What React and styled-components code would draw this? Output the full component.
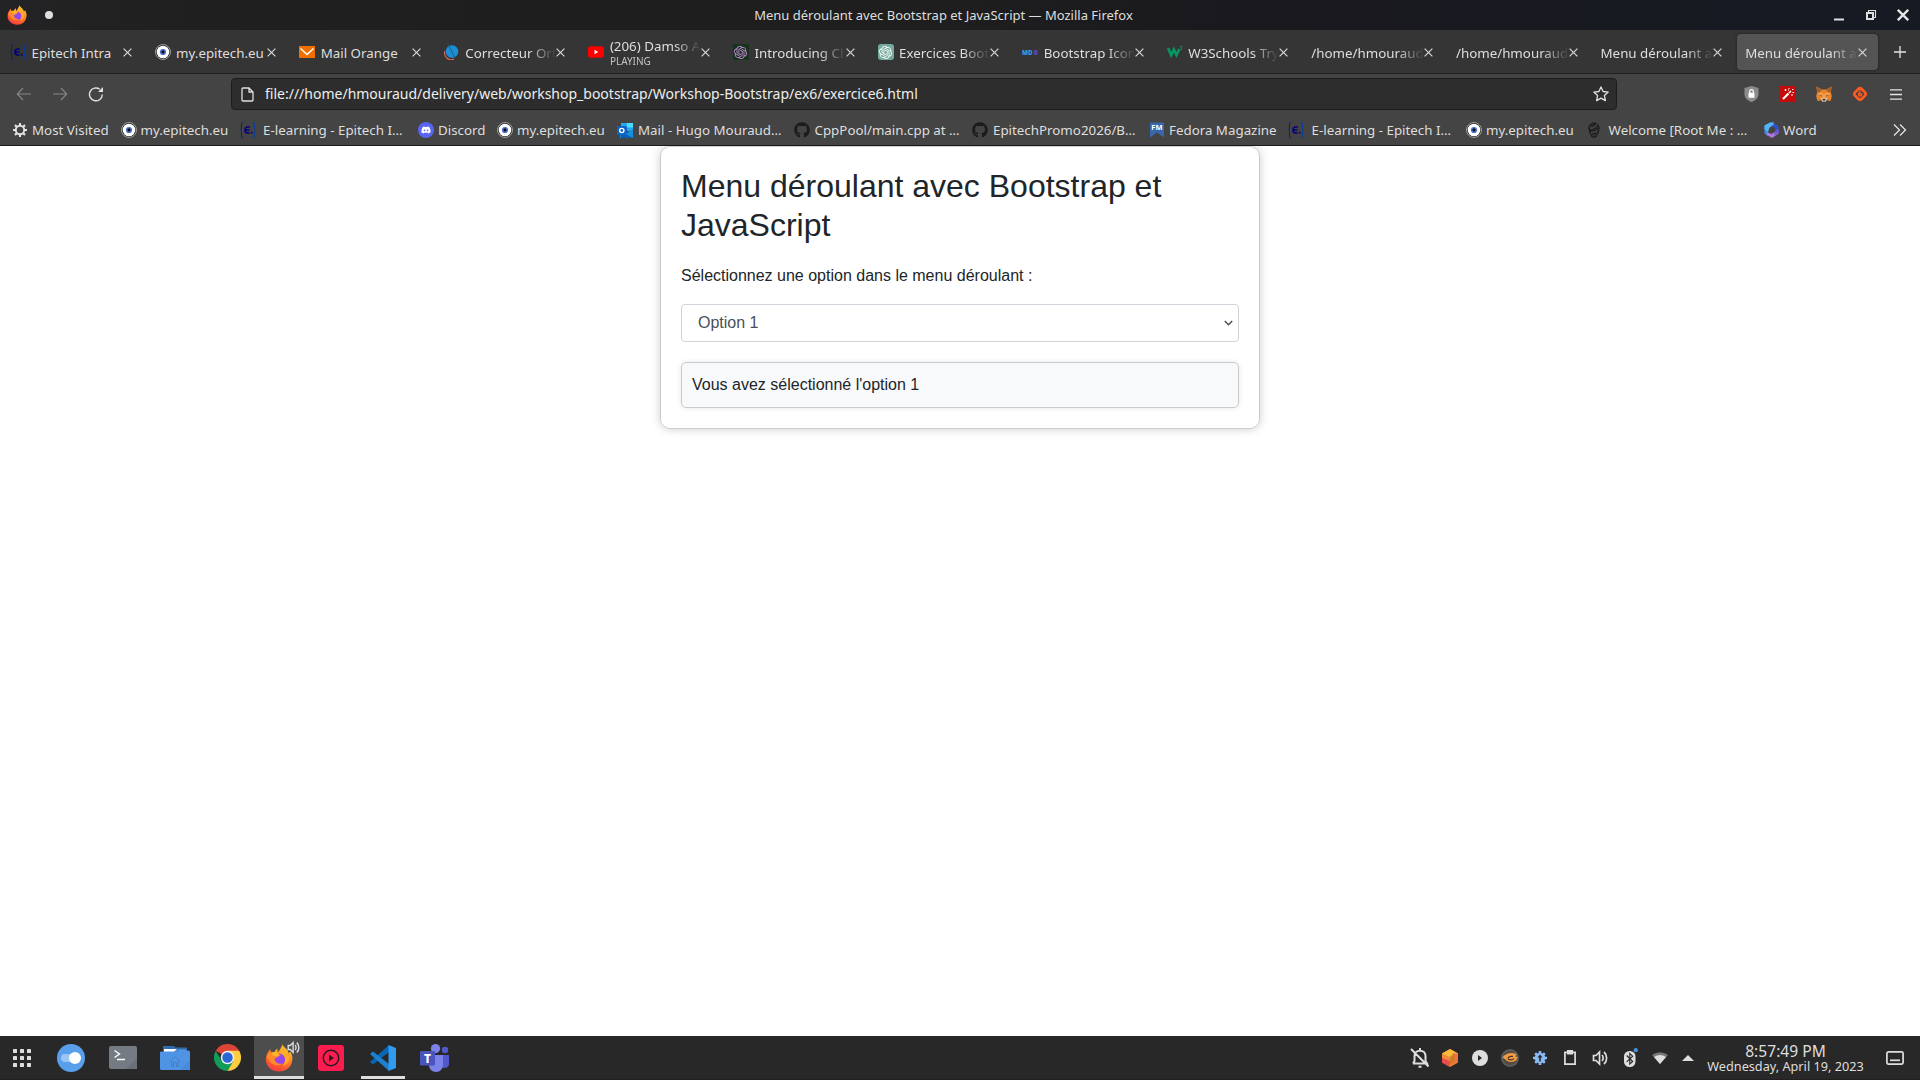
import React, { useState } from "react";
import styled, { createGlobalStyle } from "styled-components";
import { FaGithub, FaDiscord } from "react-icons/fa";
import { SiOpenai } from "react-icons/si";

const Global = createGlobalStyle`
  *, *::before, *::after { box-sizing: border-box; }
  body { margin: 0; background: #fff; overflow: hidden; }
  svg { display: block; flex: none; }
`;

const UI = `"Noto Sans", sans-serif`;

const Screen = styled.div`
  width: 1920px;
  height: 1080px;
  display: flex;
  flex-direction: column;
  font-family: ${UI};
  color: #dedede;
  overflow: hidden;
`;

/* ---------- window title ---------- */
const TitleBar = styled.header`
  height: 30px;
  flex: none;
  display: grid;
  grid-template-columns: 1fr auto 1fr;
  align-items: center;
  background: linear-gradient(90deg, #232325 0%, #1f1f1f 12%, #1e1e1f 50%, #19191e 66%, #161a23 100%);
`;
const TitleLeft = styled.div`
  display: flex;
  align-items: center;
  gap: 18px;
  padding-left: 7px;
`;
const PinDot = styled.span`
  width: 8px;
  height: 8px;
  border-radius: 50%;
  background: #dedede;
`;
const TitleText = styled.div`
  font-size: 13px;
  line-height: 20px;
  padding-right: 33px;
  white-space: nowrap;
`;
const WindowButtons = styled.div`
  display: flex;
  justify-content: flex-end;
  gap: 20px;
  padding-right: 11px;
`;

/* ---------- tabs ---------- */
const TabBar = styled.nav`
  height: 44px;
  flex: none;
  display: flex;
  background: #353535;
  border-bottom: 1px solid #202020;
`;
const TabCell = styled.div`
  width: 144.6px;
  padding: 4px 2px 3px;
  display: flex;
`;
const TabBody = styled.div`
  flex: 1;
  min-width: 0;
  display: flex;
  align-items: center;
  padding-left: 8px;
  border-radius: 4px;
  background: ${(p) => (p.$active ? "#545454" : "transparent")};
  box-shadow: ${(p) => (p.$active ? "0 0 3px rgba(0,0,0,.45)" : "none")};
`;
const TabIcon = styled.span`
  width: 16px;
  height: 16px;
  margin-right: 5.5px;
`;
const TabLabel = styled.div`
  flex: 1;
  min-width: 0;
  overflow: hidden;
  white-space: nowrap;
  font-size: 13.33px;
  line-height: ${(p) => (p.$playing ? 15 : 18)}px;
  padding-top: 2px;
  mask-image: ${(p) => (p.$fade ? "linear-gradient(to left, transparent, #000 27px)" : "none")};
`;
const TabStatus = styled.div`
  font-size: 10px;
  line-height: 14px;
  color: #c4c4c4;
`;
const TabClose = styled.span`
  width: 20px;
  display: flex;
`;
const NewTab = styled.div`
  flex: 1;
  display: flex;
  align-items: center;
  justify-content: center;
  padding-top: 1px;
`;

/* ---------- toolbar ---------- */
const NavBar = styled.div`
  height: 40px;
  flex: none;
  display: flex;
  align-items: center;
  padding: 0 6px;
  background: #444;
`;
const NavButton = styled.span`
  width: 36px;
  height: 32px;
  display: flex;
  align-items: center;
  justify-content: center;
`;
const UrlBar = styled.div`
  width: 1386px;
  height: 32px;
  margin: 0 116.5px 0 117px;
  display: flex;
  align-items: center;
  padding: 0 7px 0 9px;
  background: #2d2d2d;
  border: 1px solid #1c1c1c;
  border-radius: 4px;
`;
const UrlText = styled.div`
  flex: 1;
  padding: 0 0 1px 11px;
  font-size: 14px;
  line-height: 20px;
  color: #eee;
  white-space: nowrap;
`;

const Bookmarks = styled.div`
  height: 32px;
  flex: none;
  display: flex;
  align-items: center;
  padding: 0 13px 0 12px;
  background: #444;
  border-bottom: 1px solid #1c1820;
`;
const Bookmark = styled.div`
  width: ${(p) => p.$w}px;
  flex: none;
  display: flex;
  align-items: center;
  gap: ${(p) => p.$gap}px;
  font-size: 13.33px;
  line-height: 18px;
  white-space: nowrap;
`;
const Overflow = styled.div`
  margin-left: auto;
`;

/* ---------- page ---------- */
const Page = styled.main`
  flex: 1;
  min-height: 0;
  overflow: hidden;
  background: #fff;
  color: #212529;
  font-family: "Liberation Sans", Arial, sans-serif;
  font-size: 16px;
  line-height: 24px;
`;
const Card = styled.section`
  width: 600px;
  margin: 0 auto;
  padding: 20px;
  border: 1px solid #ccc;
  border-radius: 10px;
  box-shadow: 0 0 10px rgba(0, 0, 0, 0.2);
`;
const Heading = styled.h1`
  margin: 0 0 18.8px;
  font-size: 32px;
  line-height: 39px;
  font-weight: 400;
`;
const Lead = styled.p`
  margin: 0 0 16px;
`;
const Select = styled.div`
  height: 38px;
  display: flex;
  align-items: center;
  justify-content: space-between;
  padding: 0 5px 0 16px;
  border: 1px solid #ced4da;
  border-radius: 4px;
  color: #495057;
`;
const Result = styled.div`
  margin-top: 20px;
  padding: 10px;
  border: 1px solid #ccc;
  border-radius: 5px;
  background: #f8f9fa;
  box-shadow: 0 0 5px rgba(0, 0, 0, 0.1);
`;

/* ---------- desktop panel ---------- */
const Panel = styled.footer`
  height: 44px;
  flex: none;
  display: flex;
  background: #282828;
  border-bottom: 1px solid #211f20;
`;
const Launcher = styled.div`
  width: 46px;
  display: flex;
  align-items: center;
  padding-left: 12.5px;
`;
const Task = styled.div`
  width: 50px;
  margin-right: 2px;
  position: relative;
  display: flex;
  align-items: center;
  justify-content: center;
  background: ${(p) => (p.$active ? "#4d4d4d" : "transparent")};
  border-bottom: 3px solid ${(p) => (p.$active ? "#dedede" : "transparent")};
  padding-top: 3px;
  ${(p) => p.$open && "background: linear-gradient(#dedede, #dedede) 3px 100% / 44px 3px no-repeat border-box;"}
`;
const SoundBadge = styled.span`
  position: absolute;
  top: 5px;
  right: 4px;
`;
const Tray = styled.div`
  margin-left: auto;
  display: flex;
  align-items: center;
`;
const TrayItem = styled.span`
  width: ${(p) => p.$w || 30}px;
  display: flex;
  justify-content: center;
`;
const Clock = styled.div`
  width: 169px;
  text-align: center;
  color: #dedede;
  white-space: nowrap;
`;
const Time = styled.div`
  font-size: 15.6px;
  line-height: 16px;
  padding-top: 1px;
`;
const DateLine = styled.div`
  font-size: 12.7px;
  line-height: 15px;
`;

/* ---------- drawings ---------- */
const Firefox = ({ size }) => (
  <svg width={size} height={size} viewBox="0 0 32 32">
    <defs>
      <linearGradient id="fxa" x1=".8" y1="0" x2=".3" y2="1">
        <stop offset="0" stopColor="#ffd53a" />
        <stop offset=".4" stopColor="#ff8b20" />
        <stop offset=".75" stopColor="#fd5a30" />
        <stop offset="1" stopColor="#f63a45" />
      </linearGradient>
    </defs>
    <path d="M20 0.500c1 3 4 4 6 7l1 3 2-2c2 4 3 7 2 11-1 7-7 12-15 12S1 26 1 18c0-4 1-8 5-12l1 4 4-1c1-2 2-3 3-4v4c3-1 5-3 6-8.500z" fill="url(#fxa)" />
    <circle cx="16.500" cy="17.500" r="6.500" fill="#9746e8" />
    <path d="M20 .5c-2 5-5 7-3 9.500 4 1 6 4 6 8 0 3-1 5-3 7 4 0 8-4 8-9-1-7-7-9-8-15.500z" fill="#ffb12b" opacity=".8" />
    <path d="M2 14c2-5 7-6 11-3l4 1.500c-1 2-3 2.500-6 4 0 4 4 7 9 6-6 4-14 2-18-8.500z" fill="#ff8a2a" />
    <path d="M7 10l4-1 3-4v4l1 2.500 3 1-5 1.500-4-1z" fill="#ffb52b" />
  </svg>
);

const Cross = ({ size = 9, w = 1.2, color = "#d6d6d6" }) => (
  <svg width={size} height={size} viewBox="0 0 9 9">
    <path d="M.6.6l7.8 7.8M8.400.6L.6 8.400" stroke={color} strokeWidth={w} />
  </svg>
);

const Epitech = () => (
  <svg width="16" height="16" viewBox="0 0 16 16" fill="none" stroke="#000080">
    <path d="M3.500 .500H2.500Q1.500.500 1.500 2V6Q1.500 7.500.5 8q1 .5 1 2v4q0 1.500 1 1.500h1" stroke="#06207c" />
    <path d="M12.500.500h1q1 0 1 1.500v4q0 1.500 1 2-1 .5-1 2v4q0 1.500-1 1.500h-1" stroke="#0c3a98" />
    <path d="M9.800 5H7.800Q5 5 5 8t2.800 3h2M5 8h4.500" strokeWidth="1.700" />
    <path d="M11.700 9.800v2" strokeWidth="1.500" />
  </svg>
);
const Eye = () => (
  <svg width="16" height="16" viewBox="0 0 16 16">
    <circle cx="8" cy="8" r="7.500" fill="#222" stroke="#bbb" strokeWidth=".8" />
    <circle cx="8" cy="8" r="6.300" fill="#fff" />
    <circle cx="8" cy="8" r="3.100" fill="#4b6fc4" />
    <circle cx="8" cy="8" r="1.400" fill="#05060c" />
  </svg>
);
const Orange = () => (
  <svg width="16" height="16" viewBox="0 0 16 16">
    <path d="M0 2h16v12H0z" fill="#f16e00" />
    <path d="M1.500 4.500L8 10.500l6.500-6" fill="none" stroke="#fff" strokeWidth="1.500" />
  </svg>
);
const Correct = () => (
  <svg width="16" height="16" viewBox="0 0 16 16" fill="none">
    <path d="M1 7a6.500 6.500 0 0 0 9 8" stroke="#e0605a" strokeWidth="1.200" />
    <circle cx="8" cy="7.500" r="6.300" fill="#1a8fd4" />
    <path d="M4 .5l7 13.500" stroke="#26587a" strokeWidth="1" />
  </svg>
);
const YouTube = () => (
  <svg width="16" height="16" viewBox="0 0 16 16">
    <rect y="2.300" width="16" height="11.400" rx="3" fill="#f00" />
    <path d="M6.500 5.800v4.400L10.300 8z" fill="#fff" />
  </svg>
);
const GptBox = styled.span`
  width: 16px;
  height: 16px;
  display: flex;
  align-items: center;
  justify-content: center;
  color: ${(p) => p.$fg};
  background: ${(p) => p.$bg};
  border-radius: ${(p) => p.$r}px;
`;
const Mdb = () => (
  <svg width="16" height="16" viewBox="0 0 16 16" fontFamily="Noto Sans, sans-serif" fontWeight="900" fontSize="7.500">
    <text x="0" y="10.500" textLength="10.500" lengthAdjust="spacingAndGlyphs" fill="#2f9de0">MD</text>
    <text x="11.500" y="10.500" textLength="4.500" lengthAdjust="spacingAndGlyphs" fill="#5b46b8">B</text>
  </svg>
);
const W3 = () => (
  <svg width="16" height="16" viewBox="0 0 16 16" fill="none" stroke="#059862">
    <path d="M1 4l3.200 7 2.600-5.500L9.500 11l3-6" strokeWidth="2.700" />
    <path d="M13 2.500h2L14 4c1.600.3 1 2-.8 1.500" strokeWidth=".8" />
  </svg>
);
const Gear = () => (
  <svg width="16" height="16" viewBox="0 0 16 16" fill="none" stroke="#e4e4e4">
    <circle cx="8" cy="8" r="4.200" strokeWidth="1.900" />
    <path d="M8 1v2.500M8 12.500V15M1 8h2.500M12.500 8H15M3 3l1.900 1.900M11.100 11.100L13 13M13 3l-1.900 1.900M4.900 11.100L3 13" strokeWidth="2.100" />
  </svg>
);
const DiscordIcon = () => (
  <GptBox $bg="#5865f2" $fg="#fff" $r={8}><FaDiscord size={10} /></GptBox>
);
const Outlook = () => (
  <svg width="16" height="16" viewBox="0 0 16 16">
    <path d="M4 1h12v8H4z" fill="#28a8ea" /><path d="M10 1h6v4.500h-6z" fill="#50d9ff" />
    <path d="M4 5h6v4.500H4z" fill="#0364b8" />
    <path d="M3 16v-6l7 1 6-4v9z" fill="#1490df" /><path d="M3 9l13 7H4z" fill="#0a5fb0" />
    <rect y="4" width="9.500" height="9" rx="1" fill="#0a63c9" />
    <circle cx="4.800" cy="8.500" r="2.100" fill="none" stroke="#fff" strokeWidth="1.400" />
  </svg>
);
const GitHub = () => <FaGithub size={16} color="#1b1b1b" />;
const Fedora = () => (
  <svg width="14" height="16" viewBox="0 0 14 16">
    <path d="M0 .5h14V15.500l-7-5-7 5z" fill="#3a66ac" />
    <text x="1.200" y="7.800" fontFamily="Noto Sans, sans-serif" fontSize="7.500" fontWeight="700" textLength="11.500" fill="#fff">FM</text>
  </svg>
);
const RootMe = () => (
  <svg width="12" height="16" viewBox="0 0 12 16" fill="none" stroke="#151515">
    <path d="M6 1C2 1 .7 4 1 7l1 4 2 4h4l2-4 1-4c0-3-1-6-5-6z" fill="#333" />
    <path d="M1 7c3 2 7-1 9-4M2 9c3 1 6-1 8-3M4 12l2-1 2 1M3 4l5-2" strokeWidth="1" />
    <path d="M2 6c3 1 6-1 7-4M3 10.500c2 .5 4-.5 6-2" stroke="#6a6a6a" strokeWidth=".6" />
  </svg>
);
const Word = () => (
  <svg width="15" height="16" viewBox="0 0 15 16">
    <path d="M6 .5L.5 3.500v8L4 14V8l1-3 5-2.500z" fill="#3f8ee8" />
    <path d="M6 .5L10 0v3L5.500 5.500 4 10 .5 7V3.500z" fill="#56b4f0" />
    <path d="M8 0l6.500 4v7L11 9V6L7.500 4 10 2.500z" fill="#2d50d0" />
    <path d="M14.500 8v3.500L8 16l-6-3.500 2-2 3.500 1.500 4-2.500z" fill="#a77ae0" />
    <path d="M14.500 6.500V11l-4.500 2 1-4z" fill="#6a55cc" />
  </svg>
);

const tabs = [
  { icon: <Epitech />, label: "Epitech Intra" },
  { icon: <Eye />, label: "my.epitech.eu" },
  { icon: <Orange />, label: "Mail Orange" },
  { icon: <Correct />, label: "Correcteur Orthographe", fade: true },
  { icon: <YouTube />, label: "(206) Damso A", fade: true, status: "PLAYING" },
  { icon: <GptBox $bg="#17331c" $fg="#c88be0"><SiOpenai size={13} /></GptBox>, label: "Introducing ChatGPT", fade: true },
  { icon: <GptBox $bg="#74aa9c" $fg="#fff" $r={3}><SiOpenai size={13} /></GptBox>, label: "Exercices Bootstrap", fade: true },
  { icon: <Mdb />, label: "Bootstrap Icons", fade: true },
  { icon: <W3 />, label: "W3Schools Tryit", fade: true },
  { label: "/home/hmouraud/", fade: true },
  { label: "/home/hmouraud/", fade: true },
  { label: "Menu déroulant avec", fade: true },
  { label: "Menu déroulant avec", fade: true, active: true },
];

const bookmarks = [
  { icon: <Gear />, label: "Most Visited", w: 109, gap: 4 },
  { icon: <Eye />, label: "my.epitech.eu", w: 119, gap: 3.5 },
  { icon: <Epitech />, label: "E-learning - Epitech I…", w: 178, gap: 7 },
  { icon: <DiscordIcon />, label: "Discord", w: 79, gap: 4 },
  { icon: <Eye />, label: "my.epitech.eu", w: 120, gap: 4 },
  { icon: <Outlook />, label: "Mail - Hugo Mouraud…", w: 177, gap: 5 },
  { icon: <GitHub />, label: "CppPool/main.cpp at …", w: 178, gap: 4.5 },
  { icon: <GitHub />, label: "EpitechPromo2026/B…", w: 178, gap: 5 },
  { icon: <Fedora />, label: "Fedora Magazine", w: 138, gap: 5 },
  { icon: <Epitech />, label: "E-learning - Epitech I…", w: 178, gap: 7.5 },
  { icon: <Eye />, label: "my.epitech.eu", w: 122, gap: 4 },
  { icon: <RootMe />, label: "Welcome [Root Me : …", w: 176, gap: 8.5 },
  { icon: <Word />, label: "Word", w: 60, gap: 4 },
];

const Sound = ({ size = 16, color = "#dedede" }) => (
  <svg width={size} height={size} viewBox="0 0 16 16" fill="none" stroke={color} strokeWidth="1.700">
    <path d="M1.500 5.500H4L7.500 2v12L4 10.500H1.500z" />
    <path d="M10 5c1.500 1.500 1.500 4.500 0 6M12 2c3.500 3 3.500 9 0 12" />
  </svg>
);

const taskIcons = [
  {
    icon: (
      <svg width="28" height="28" viewBox="0 0 28 28">
        <circle cx="14" cy="14" r="14" fill="#5a9fec" />
        <rect x="4" y="10" width="18" height="8" rx="4" fill="#9cc5f4" />
        <circle cx="18" cy="14" r="6" fill="#fff" />
      </svg>
    ),
  },
  {
    icon: (
      <svg width="28" height="24" viewBox="0 0 28 24">
        <rect width="28" height="23" rx="2" fill="#757b82" />
        <path d="M28 12v11H17z" fill="#6b7178" />
        <path d="M5.500 4.500l5 3.500-5 3.500M8 13.500h8" stroke="#fff" strokeWidth="1.400" fill="none" />
      </svg>
    ),
  },
  {
    icon: (
      <svg width="30" height="24" viewBox="0 0 30 24">
        <path d="M3 0h11l1.500 1.500H27V9H3z" fill="#2e6cab" />
        <path d="M4 3h13l-3 3H4z" fill="#fff" /><path d="M18 3.500h8V6h-8z" fill="#5a9be0" />
        <path d="M0 6.500Q0 5.500 1.500 5.500H14l2-1h12.500Q30 4.500 30 6v16.500q0 1.500-1.500 1.500h-27Q0 24 0 22.500z" fill="#4f94e4" />
        <path d="M30 14v10H20z" fill="#478ada" />
        <path d="M10 15.500l5-5 5 5M11.500 14.500v6h2v-4h3v4h2v-6" stroke="#3f80c6" fill="none" strokeWidth="1" />
      </svg>
    ),
  },
  {
    icon: (
      <svg width="27" height="27" viewBox="0 0 48 48">
        <path d="M24 24L3.200 12A24 24 0 0 1 44.800 12z" fill="#db4437" />
        <path d="M3.200 12A24 24 0 0 0 24 48l10.400-18L24 24 13.600 30z" fill="#0f9d58" />
        <path d="M44.800 12A24 24 0 0 1 24 48l10.400-18L24 12z" fill="#ffcd40" />
        <circle cx="24" cy="24" r="12" fill="#f1f1f1" /><circle cx="24" cy="24" r="9.300" fill="#2a67d4" />
      </svg>
    ),
  },
  { icon: <Firefox size={28} />, active: true, sound: true },
  {
    icon: (
      <svg width="26" height="26" viewBox="0 0 26 26">
        <rect width="26" height="26" rx="3" fill="#fc1c50" />
        <circle cx="13" cy="13" r="7.700" fill="none" stroke="#281a20" strokeWidth="1.500" />
        <path d="M11 9.500v7l5-3.500z" fill="#281a20" />
      </svg>
    ),
  },
  {
    icon: (
      <svg width="26" height="26" viewBox="0 0 26 26">
        <path d="M19 0v7L3 19.500 0 17z" fill="#0a66b4" />
        <path d="M0 9l3-2.500L19 19v7z" fill="#1b80d0" />
        <path d="M18.500 0L26 3v20l-7.500 3z" fill="#2f9cf0" />
      </svg>
    ),
    open: true,
  },
  {
    icon: (
      <svg width="30" height="28" viewBox="0 0 30 28">
        <circle cx="25" cy="6" r="3.200" fill="#5059c9" />
        <path d="M19 11h10v9c0 3-3 4-5 4s-5-2-5-4z" fill="#5059c9" />
        <circle cx="15.500" cy="4.600" r="4.600" fill="#7b83eb" />
        <path d="M9 11h14v9c0 5-3 8-7 8s-7-3-7-7z" fill="#7b83eb" />
        <rect y="7" width="15" height="14.500" rx="1.300" fill="#4b53bc" />
        <text x="7.500" y="18.500" textAnchor="middle" fontFamily="Noto Sans, sans-serif" fontWeight="800" fontSize="12" fill="#fff">T</text>
      </svg>
    ),
  },
];

const tray = [
  <svg key="bell" width="20" height="20" viewBox="0 0 20 20" fill="none" stroke="#dedede" strokeWidth="2">
    <path d="M3 15.500h14L15.500 13V8c0-3-2-5.300-5.500-5.300S4.500 5 4.500 8v5L3 15.500M10 0v3M8.500 18.800h3M1 1l17.500 17.500" />
  </svg>,
  <svg key="hex" width="16" height="18" viewBox="0 0 16 18">
    <path d="M8 0l8 4.500v9L8 18l-8-4.500v-9z" fill="#f28a3c" /><path d="M8 0l8 4.500-8 3.500-8-3.500z" fill="#fdb93a" />
    <path d="M12 4l4 1v8.500L9 17z" fill="#f0743c" /><path d="M0 9l8 3v6l-8-4.500z" fill="#ea4a4c" />
    <path d="M12 4L8 8v6l1 2 4-6z" fill="#c57e22" opacity=".85" />
  </svg>,
  <svg key="play" width="16" height="16" viewBox="0 0 16 16">
    <circle cx="8" cy="8" r="8" fill="#dedede" /><path d="M6 5v6l4-3z" fill="#282828" />
  </svg>,
  <svg key="orb" width="18" height="18" viewBox="0 0 18 18">
    <circle cx="9" cy="9" r="9" fill="#5c5c5c" /><circle cx="9" cy="9" r="7" fill="#54493f" />
    <path d="M1.500 8.500c3-4 8-5.500 14-3.500l-1 2.500 2 .5-1 3c-4 3-9 2.500-11-.5z" fill="#f09a42" />
    <path d="M7 9.500c0-2 3-2.500 5-2M7 10c2 1.500 5 1 6-.5" fill="none" stroke="#4a3524" strokeWidth="1.200" />
  </svg>,
  <svg key="upd" width="14" height="14" viewBox="0 0 14 14">
    <circle cx="7" cy="7" r="5.300" fill="#8abbf4" />
    <path d="M7 0v14M0 7h14M2.200 2.200l9.600 9.600M11.800 2.200l-9.600 9.600" stroke="#8abbf4" strokeWidth="2.600" />
    <path d="M7 3.500L4.500 6.500H6.200V10.500H7.800V6.500H9.500z" fill="#282828" />
  </svg>,
  <svg key="clip" width="12" height="15" viewBox="0 0 12 15">
    <path d="M.9 2.400h10.200v11.700H.9z" fill="none" stroke="#dedede" strokeWidth="1.700" /><path d="M3 0h6v4.500H3z" fill="#dedede" />
  </svg>,
  <Sound key="vol" />,
  <svg key="bt" width="16" height="20" viewBox="0 0 16 20">
    <rect x="2" y="3" width="11.500" height="16" rx="5.500" fill="#dedede" />
    <path d="M4.700 7.500l6 6L7.800 16V5.500l2.900 2.700-6 5.700" fill="none" stroke="#282828" strokeWidth="1.100" />
    <circle cx="13.800" cy="2.200" r="2.100" fill="#4b8fe0" />
  </svg>,
  <svg key="wifi" width="16" height="12" viewBox="0 0 16 12">
    <path d="M0 3Q8-2.500 16 3L8 12z" fill="#777" /><path d="M2 5Q8 1 14 5L8 12z" fill="#dedede" />
  </svg>,
];

export default function App() {
  const [choice] = useState("1");
  return (
    <Screen>
      <Global />
      <TitleBar>
        <TitleLeft>
          <Firefox size={20} />
          <PinDot />
        </TitleLeft>
        <TitleText>Menu déroulant avec Bootstrap et JavaScript — Mozilla Firefox</TitleText>
        <WindowButtons>
          <svg width="12" height="12" viewBox="0 0 12 12"><path d="M1 9.500h10v2H1z" fill="#dedede" /></svg>
          <svg width="12" height="12" viewBox="0 0 12 12" fill="none" stroke="#dedede">
            <path d="M2 4h6v6H2z" strokeWidth="2" /><path d="M3.500 3V1.500h7v7H9" strokeWidth="1.100" />
          </svg>
          <Cross size={12} w={1.8} color="#e4e4e4" />
        </WindowButtons>
      </TitleBar>

      <TabBar>
        {tabs.map((t, i) => (
          <TabCell key={i}>
            <TabBody $active={t.active}>
              {t.icon && <TabIcon>{t.icon}</TabIcon>}
              <TabLabel $fade={t.fade} $playing={!!t.status}>
                {t.label}
                {t.status && <TabStatus>{t.status}</TabStatus>}
              </TabLabel>
              <TabClose><Cross /></TabClose>
            </TabBody>
          </TabCell>
        ))}
        <NewTab>
          <svg width="12" height="12" viewBox="0 0 12 12"><path d="M6 0v12M0 6h12" stroke="#e4e4e4" strokeWidth="1.300" /></svg>
        </NewTab>
      </TabBar>

      <NavBar>
        <NavButton>
          <svg width="16" height="14" viewBox="0 0 16 14" fill="none" stroke="#858585" strokeWidth="1.200"><path d="M15 7H1.500M7 1L1.300 7 7 13" /></svg>
        </NavButton>
        <NavButton>
          <svg width="16" height="14" viewBox="0 0 16 14" fill="none" stroke="#858585" strokeWidth="1.200"><path d="M1 7h13.500M9 1l5.700 6L9 13" /></svg>
        </NavButton>
        <NavButton>
          <svg width="16" height="16" viewBox="0 0 16 16" fill="none" stroke="#e0e0e0" strokeWidth="1.400">
            <path d="M14.300 8.500A6.400 6.400 0 1 1 11.800 3.300" /><path d="M15 1v5h-5z" fill="#e0e0e0" stroke="none" />
          </svg>
        </NavButton>
        <UrlBar>
          <svg width="13" height="15" viewBox="0 0 13 15" fill="none" stroke="#e0e0e0" strokeWidth="1.300">
            <path d="M1 2Q1 1 2 1h6l4 4v8q0 1-1 1H2q-1 0-1-1zM8 1v4h4" />
          </svg>
          <UrlText>file:///home/hmouraud/delivery/web/workshop_bootstrap/Workshop-Bootstrap/ex6/exercice6.html</UrlText>
          <svg width="16" height="16" viewBox="0 0 16 16" fill="none" stroke="#e0e0e0" strokeWidth="1.300" strokeLinejoin="round">
            <path d="M8 .9l2.100 4.600 5.100.6-3.800 3.500 1 5L8 12.100l-4.400 2.500 1-5L.8 6.100l5.100-.6z" />
          </svg>
        </UrlBar>
        <NavButton>
          <svg width="15" height="16" viewBox="0 0 15 16">
            <path d="M7.500 0L14.500 2v6c0 4-3 6.500-7 8-4-1.500-7-4-7-8V2z" fill="#8b8b8b" />
            <rect x="4.500" y="6.800" width="6" height="5" rx=".6" fill="#fff" /><path d="M5.700 7V5.400a1.800 1.800 0 0 1 3.600 0V7" fill="none" stroke="#fff" strokeWidth="1.200" />
          </svg>
        </NavButton>
        <NavButton>
          <svg width="16" height="16" viewBox="0 0 16 16">
            <path d="M0 0h16v16H0z" fill="#c40a0a" /><path d="M3 13l5.500-5.500" stroke="#fff" strokeWidth="2.200" />
            <path d="M9 7l2-2" stroke="#fff" strokeWidth="1.600" />
            <path d="M4.500 4h2M5.500 3v2M8.500 2.500h1M12 3.500h1.500M12.500 6.500h1.500M11 9h2M8 4h1" stroke="#fff" strokeWidth="1" />
          </svg>
        </NavButton>
        <NavButton>
          <svg width="16" height="16" viewBox="0 0 16 16">
            <path d="M.5.500L6 3.500h4L15.500.500 15 6l.8 4.500L14.500 15l-4-1L9.500 15.500h-3L5.500 14l-4 1L.2 10.500 1 6z" fill="#e8832c" />
            <path d="M.5.500L6 3.500 4 6.500H1zM15.500.500L10 3.500l2 3h3z" fill="#a8602a" />
            <path d="M2 7l3-1 3 2 3-2 3 1-2 4-4 2-4-2z" fill="#f59a45" />
            <path d="M3.500 9l2.500.8-.5.900zM12.500 9l-2.500.8.5.900z" fill="#2a2a2a" />
            <path d="M4.500 12l2 .5h3l2-.5-1.500 3.500H6z" fill="#d8c8bc" /><path d="M6.500 13h3l-.5 1.500H7z" fill="#222" />
          </svg>
        </NavButton>
        <NavButton>
          <svg width="16" height="16" viewBox="0 0 16 16" fill="none" stroke="#ff5a1f">
            <rect x="3.300" y="3.300" width="9.400" height="9.400" rx="2.600" transform="rotate(45 8 8)" strokeWidth="2.700" />
            <path d="M8.500 4.500L6.500 8Q6.500 10 8 10t1.800-2H7.500" strokeWidth="1.400" />
          </svg>
        </NavButton>
        <NavButton>
          <svg width="12" height="11" viewBox="0 0 12 11"><path d="M0 .8h12M0 5.500h12M0 10.200h12" stroke="#e4e4e4" strokeWidth="1.300" /></svg>
        </NavButton>
      </NavBar>

      <Bookmarks>
        {bookmarks.map((b, i) => (
          <Bookmark key={i} $w={b.w} $gap={b.gap}>
            {b.icon}
            {b.label}
          </Bookmark>
        ))}
        <Overflow>
          <svg width="14" height="12" viewBox="0 0 14 12" fill="none" stroke="#e4e4e4" strokeWidth="1.300"><path d="M1 .5L6.500 6 1 11.500M7 .5L12.500 6 7 11.500" /></svg>
        </Overflow>
      </Bookmarks>

      <Page>
        <Card>
          <Heading>Menu déroulant avec Bootstrap et JavaScript</Heading>
          <Lead>Sélectionnez une option dans le menu déroulant :</Lead>
          <Select role="combobox">
            Option {choice}
            <svg width="9" height="6" viewBox="0 0 9 6" fill="none" stroke="#495057" strokeWidth="1.500"><path d="M.8.900l3.700 3.800L8.200.900" /></svg>
          </Select>
          <Result>Vous avez sélectionné l'option {choice}</Result>
        </Card>
      </Page>

      <Panel>
        <Launcher>
          <svg width="18" height="18" viewBox="0 0 18 18" fill="#dedede">
            {[0, 7, 14].flatMap((y) => [0, 7, 14].map((x) => <rect key={`${x}-${y}`} x={x} y={y} width="4" height="4" rx=".6" />))}
          </svg>
        </Launcher>
        {taskIcons.map((t, i) => (
          <Task key={i} $active={t.active} $open={t.open}>
            {t.icon}
            {t.sound && <SoundBadge><Sound size={13} /></SoundBadge>}
          </Task>
        ))}
        <Tray>
          {tray.map((icon, i) => (
            <TrayItem key={i}>{icon}</TrayItem>
          ))}
          <TrayItem $w={26}>
            <svg width="12" height="6" viewBox="0 0 12 6"><path d="M6 0l6 6H0z" fill="#dedede" /></svg>
          </TrayItem>
          <Clock>
            <Time>8:57:49 PM</Time>
            <DateLine>Wednesday, April 19, 2023</DateLine>
          </Clock>
          <TrayItem $w={50}>
            <svg width="18" height="14" viewBox="0 0 18 14" fill="none" stroke="#dedede" strokeWidth="1.700"><rect x=".9" y=".9" width="16.200" height="12.200" rx="1.500" /><path d="M4 9.300h10" /></svg>
          </TrayItem>
        </Tray>
      </Panel>
    </Screen>
  );
}
